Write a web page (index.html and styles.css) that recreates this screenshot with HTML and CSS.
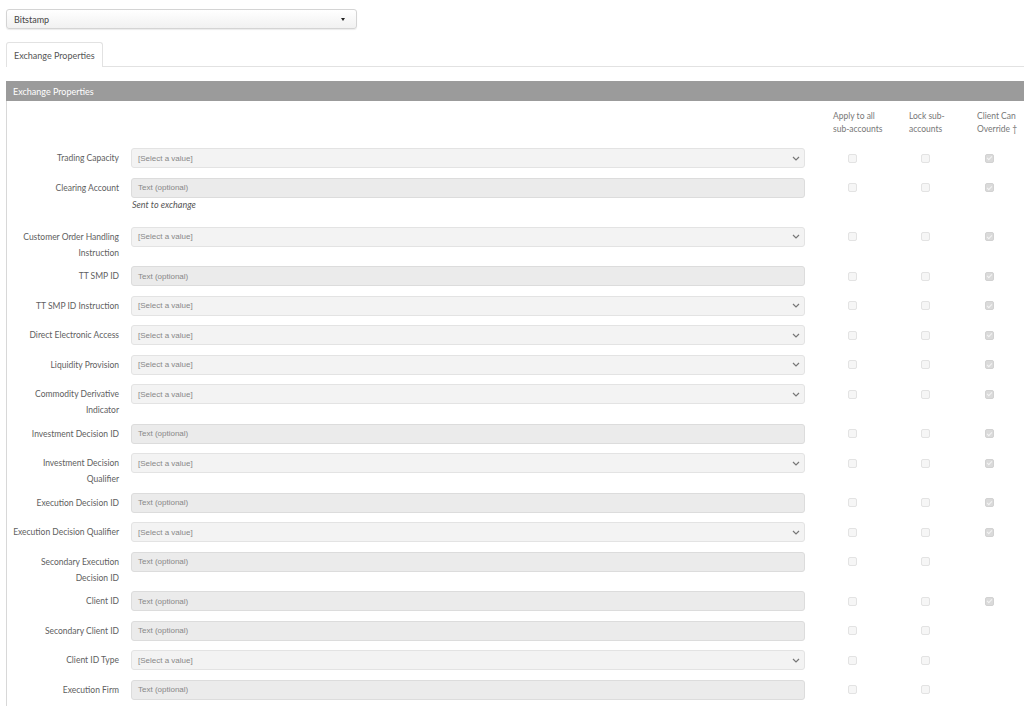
FILE: index.html
```html
<!DOCTYPE html>
<html lang="en">
<head>
<meta charset="UTF-8">
<title>Exchange Properties</title>
<link rel="stylesheet" href="styles.css">
</head>
<body>
  <div class="exchange-picker">
    <span>Bitstamp</span>
    <span class="caret"></span>
  </div>

  <div class="tabs">
    <div class="tab">Exchange Properties</div>
  </div>

  <div class="panel">
    <div class="panel-heading">Exchange Properties</div>
    <div class="panel-body">

      <div class="row head-row">
        <div class="label"></div>
        <div class="control"></div>
        <div class="col col-a">Apply to all<br>sub-accounts</div>
        <div class="col col-b">Lock sub-<br>accounts</div>
        <div class="col col-c">Client Can<br>Override &dagger;</div>
      </div>

      <div class="row">
        <div class="label">Trading Capacity</div>
        <div class="control"><div class="field select">[Select a value]</div></div>
        <div class="col col-a"><span class="check"></span></div>
        <div class="col col-b"><span class="check"></span></div>
        <div class="col col-c"><span class="check on"></span></div>
      </div>

      <div class="row">
        <div class="label">Clearing Account</div>
        <div class="control">
          <div class="field">Text (optional)</div>
          <div class="help">Sent to exchange</div>
        </div>
        <div class="col col-a"><span class="check"></span></div>
        <div class="col col-b"><span class="check"></span></div>
        <div class="col col-c"><span class="check on"></span></div>
      </div>

      <div class="row">
        <div class="label">Customer Order Handling Instruction</div>
        <div class="control"><div class="field select">[Select a value]</div></div>
        <div class="col col-a"><span class="check"></span></div>
        <div class="col col-b"><span class="check"></span></div>
        <div class="col col-c"><span class="check on"></span></div>
      </div>

      <div class="row">
        <div class="label">TT SMP ID</div>
        <div class="control"><div class="field">Text (optional)</div></div>
        <div class="col col-a"><span class="check"></span></div>
        <div class="col col-b"><span class="check"></span></div>
        <div class="col col-c"><span class="check on"></span></div>
      </div>

      <div class="row">
        <div class="label">TT SMP ID Instruction</div>
        <div class="control"><div class="field select">[Select a value]</div></div>
        <div class="col col-a"><span class="check"></span></div>
        <div class="col col-b"><span class="check"></span></div>
        <div class="col col-c"><span class="check on"></span></div>
      </div>

      <div class="row">
        <div class="label">Direct Electronic Access</div>
        <div class="control"><div class="field select">[Select a value]</div></div>
        <div class="col col-a"><span class="check"></span></div>
        <div class="col col-b"><span class="check"></span></div>
        <div class="col col-c"><span class="check on"></span></div>
      </div>

      <div class="row">
        <div class="label">Liquidity Provision</div>
        <div class="control"><div class="field select">[Select a value]</div></div>
        <div class="col col-a"><span class="check"></span></div>
        <div class="col col-b"><span class="check"></span></div>
        <div class="col col-c"><span class="check on"></span></div>
      </div>

      <div class="row">
        <div class="label">Commodity Derivative Indicator</div>
        <div class="control"><div class="field select">[Select a value]</div></div>
        <div class="col col-a"><span class="check"></span></div>
        <div class="col col-b"><span class="check"></span></div>
        <div class="col col-c"><span class="check on"></span></div>
      </div>

      <div class="row">
        <div class="label">Investment Decision ID</div>
        <div class="control"><div class="field">Text (optional)</div></div>
        <div class="col col-a"><span class="check"></span></div>
        <div class="col col-b"><span class="check"></span></div>
        <div class="col col-c"><span class="check on"></span></div>
      </div>

      <div class="row">
        <div class="label">Investment Decision Qualifier</div>
        <div class="control"><div class="field select">[Select a value]</div></div>
        <div class="col col-a"><span class="check"></span></div>
        <div class="col col-b"><span class="check"></span></div>
        <div class="col col-c"><span class="check on"></span></div>
      </div>

      <div class="row">
        <div class="label">Execution Decision ID</div>
        <div class="control"><div class="field">Text (optional)</div></div>
        <div class="col col-a"><span class="check"></span></div>
        <div class="col col-b"><span class="check"></span></div>
        <div class="col col-c"><span class="check on"></span></div>
      </div>

      <div class="row">
        <div class="label nowrap">Execution Decision Qualifier</div>
        <div class="control"><div class="field select">[Select a value]</div></div>
        <div class="col col-a"><span class="check"></span></div>
        <div class="col col-b"><span class="check"></span></div>
        <div class="col col-c"><span class="check on"></span></div>
      </div>

      <div class="row">
        <div class="label">Secondary Execution Decision ID</div>
        <div class="control"><div class="field">Text (optional)</div></div>
        <div class="col col-a"><span class="check"></span></div>
        <div class="col col-b"><span class="check"></span></div>
        <div class="col col-c"></div>
      </div>

      <div class="row">
        <div class="label">Client ID</div>
        <div class="control"><div class="field">Text (optional)</div></div>
        <div class="col col-a"><span class="check"></span></div>
        <div class="col col-b"><span class="check"></span></div>
        <div class="col col-c"><span class="check on"></span></div>
      </div>

      <div class="row">
        <div class="label">Secondary Client ID</div>
        <div class="control"><div class="field">Text (optional)</div></div>
        <div class="col col-a"><span class="check"></span></div>
        <div class="col col-b"><span class="check"></span></div>
        <div class="col col-c"></div>
      </div>

      <div class="row">
        <div class="label">Client ID Type</div>
        <div class="control"><div class="field select">[Select a value]</div></div>
        <div class="col col-a"><span class="check"></span></div>
        <div class="col col-b"><span class="check"></span></div>
        <div class="col col-c"></div>
      </div>

      <div class="row">
        <div class="label">Execution Firm</div>
        <div class="control"><div class="field">Text (optional)</div></div>
        <div class="col col-a"><span class="check"></span></div>
        <div class="col col-b"><span class="check"></span></div>
        <div class="col col-c"></div>
      </div>

    </div>
  </div>
</body>
</html>
```

FILE: styles.css
```css
html, body {
    height: 100%;
}

body {
    margin: 0;
    display: flex;
    flex-direction: column;
    font-family: Lato, "Open Sans", sans-serif;
    font-size: 8.5px;
    color: #606060;
    background: #fff;
    overflow: hidden;
}

/* exchange dropdown at the top */
.exchange-picker {
    width: 335px;
    height: 18px;
    flex: none;
    margin: 9px 0 0 6px;
    padding: 0 7px;
    display: flex;
    align-items: center;
    justify-content: space-between;
    border: 1px solid #d4d4d4;
    border-radius: 3px;
    background: linear-gradient(#fff, #f1f1f1);
    box-shadow: 0 1px 1px rgba(0, 0, 0, 0.08);
    color: #444;
    font-size: 9px;
}

.exchange-picker .caret {
    width: 0;
    height: 0;
    margin-right: 4px;
    border-left: 2.5px solid transparent;
    border-right: 2.5px solid transparent;
    border-top: 3px solid #222;
}

.tabs {
    display: flex;
    flex: none;
    margin: 13px 0 0 6px;
    border-bottom: 1px solid #e2e2e2;
}

.tab {
    height: 24px;
    padding: 0 7px;
    display: flex;
    align-items: center;
    border: 1px solid #e2e2e2;
    border-bottom: none;
    border-radius: 3px 3px 0 0;
    background: #fff;
    margin-bottom: -1px;
    color: #555;
    font-size: 9px;
}

.panel {
    flex: 1;
    min-height: 0;
    display: flex;
    flex-direction: column;
    margin: 14px 0 0 6px;
}

.panel-heading {
    height: 20px;
    flex: none;
    padding: 0 7px;
    display: flex;
    align-items: center;
    background: #9b9b9b;
    color: #fff;
    font-size: 9px;
}

.panel-body {
    flex: 1;
    min-height: 0;
    overflow: hidden;
    border-left: 1px solid #d8d8d8;
    padding-top: 9px;
}

.row {
    display: flex;
    align-items: flex-start;
    margin-bottom: 9.5px;
}

.head-row {
    line-height: 13px;
    margin-bottom: 12px;
}

.label {
    width: 100px;
    padding-left: 12px;
    flex: none;
    text-align: right;
    line-height: 16px;
    padding-top: 2px;
    margin-bottom: -4px;
}

.label.nowrap {
    white-space: nowrap;
    direction: rtl;
}

.control {
    width: 674px;
    flex: none;
    margin-left: 12px;
}

.field {
    height: 18px;
    padding: 0 6px;
    display: flex;
    align-items: center;
    border: 1px solid #dcdcdc;
    border-radius: 3px;
    background: #ebebeb;
    font-family: "Liberation Sans", Arial, sans-serif;
    font-size: 8px;
    color: #888;
}

.field.select {
    background: #f3f3f3 url("data:image/svg+xml,%3Csvg xmlns='http://www.w3.org/2000/svg' width='8' height='5' viewBox='0 0 8 5'%3E%3Cpath d='M1 1l3 3 3-3' fill='none' stroke='%23777' stroke-width='1.2'/%3E%3C/svg%3E") no-repeat right 4px center;
    border-color: #e3e3e3;
}

.help {
    font-style: italic;
    font-size: 9px;
    color: #555;
    line-height: 13px;
    margin-bottom: 6.5px;
    padding-left: 1px;
}

.col {
    flex: none;
    height: 20px;
    display: flex;
    align-items: center;
}

.head-row .col {
    height: auto;
    display: block;
    color: #777;
}

.col-a { width: 96px; }
.col-b { width: 68px; }
.col-c { width: 55px; }

.head-row .col-a { padding-left: 28px; width: 68px; }
.head-row .col-b { padding-left: 8px; width: 60px; }
.head-row .col-c { padding-left: 8px; width: 47px; }

.col-a .check { margin-left: 42.5px; }
.col-b .check { margin-left: 19.5px; }
.col-c .check { margin-left: 15.5px; }

/* disabled checkboxes */
.check {
    width: 7px;
    height: 7px;
    border: 1px solid #e3e3e3;
    border-radius: 2px;
    background: #f6f6f6;
    position: relative;
}

.check.on {
    background: #dadada;
    border-color: #d2d2d2;
}

.check.on::after {
    content: "";
    position: absolute;
    left: 2px;
    top: 0.5px;
    width: 2px;
    height: 4px;
    border: solid #f4f4f4;
    border-width: 0 1px 1px 0;
    transform: rotate(45deg);
}
```
